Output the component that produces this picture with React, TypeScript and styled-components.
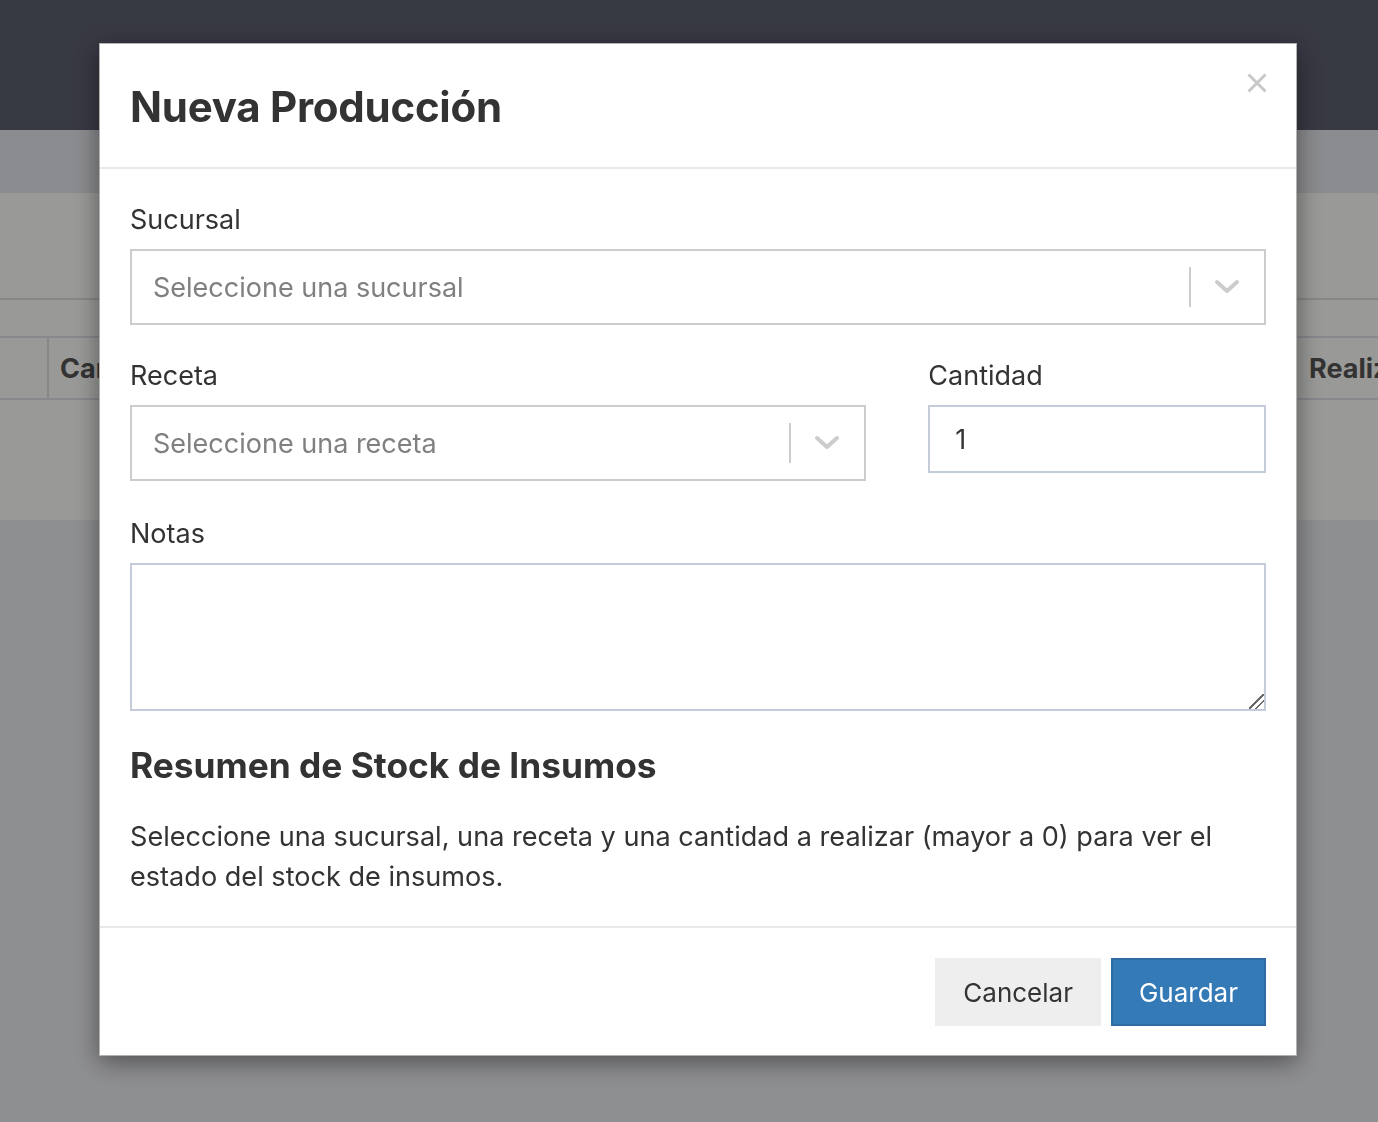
import styled, { createGlobalStyle } from 'styled-components';

const GlobalStyle = createGlobalStyle`
  html, body {
    margin: 0;
    padding: 0;
  }
  body {
    font-family: Inter, "Noto Sans", "Liberation Sans", sans-serif;
    color: #333;
    background: #edeef2;
  }
  * {
    box-sizing: border-box;
  }
`;

function Chevron() {
  return (
    <svg width="26" height="16" viewBox="0 0 26 16">
      <polyline
        points="3,3 13,12 23,3"
        fill="none"
        stroke="#cccccc"
        strokeWidth="4"
        strokeLinecap="round"
        strokeLinejoin="round"
      />
    </svg>
  );
}

function Select({ placeholder }: { placeholder: string }) {
  return (
    <SelectBox>
      <Placeholder>{placeholder}</Placeholder>
      <Separator />
      <Indicator>
        <Chevron />
      </Indicator>
    </SelectBox>
  );
}

function App() {
  return (
    <>
      <GlobalStyle />
      <Page>
        <TopBar />
        <SubBar />
        <Card>
          <Toolbar />
          <EmptyRow />
          <HeadRow>
            <HeadCell />
            <HeadCell $divider>Cantidad</HeadCell>
            <HeadCell>Realizado</HeadCell>
          </HeadRow>
          <CardBody />
        </Card>
      </Page>

      <Backdrop>
        <Modal>
          <ModalHeader>
            <ModalTitle>Nueva Producción</ModalTitle>
            <CloseButton aria-label="Cerrar">
              <svg width="20" height="20" viewBox="0 0 20 20">
                <path d="M1.5 1.5 L18.5 18.5 M18.5 1.5 L1.5 18.5" stroke="#c8c8c8" strokeWidth="3" />
              </svg>
            </CloseButton>
          </ModalHeader>

          <ModalBody>
            <FormGroup>
              <Label>Sucursal</Label>
              <Select placeholder="Seleccione una sucursal" />
            </FormGroup>

            <FormRow>
              <FormGroup>
                <Label>Receta</Label>
                <Select placeholder="Seleccione una receta" />
              </FormGroup>
              <FormGroup>
                <Label>Cantidad</Label>
                <TextInput type="number" defaultValue={1} />
              </FormGroup>
            </FormRow>

            <FormGroup>
              <Label>Notas</Label>
              <TextArea />
            </FormGroup>

            <SectionTitle>Resumen de Stock de Insumos</SectionTitle>
            <HelpText>
              Seleccione una sucursal, una receta y una cantidad a realizar (mayor a 0) para ver el
              estado del stock de insumos.
            </HelpText>
          </ModalBody>

          <ModalFooter>
            <Button $variant="default">Cancelar</Button>
            <Button $variant="primary">Guardar</Button>
          </ModalFooter>
        </Modal>
      </Backdrop>
    </>
  );
}

const Page = styled.div`
  min-height: 1122px;
  overflow: hidden;
  background: #edeef2;
`;
const TopBar = styled.div`
  height: 130px;
  background: #5d5f70;
`;
const SubBar = styled.div`
  height: 63px;
  background: #e8e9ee;
`;
const Card = styled.div`
  background: #fffffd;
`;
const Toolbar = styled.div`
  height: 107px;
  border-bottom: 2px solid #e2e2e2;
`;
const EmptyRow = styled.div`
  height: 38px;
  border-bottom: 2px solid #dfe3ea;
`;
const HeadRow = styled.div`
  display: grid;
  grid-template-columns: 47px 1fr 80px;
  height: 62px;
  border-bottom: 2px solid #dfe3ea;
`;
const HeadCell = styled.div<{ $divider?: boolean }>`
  display: flex;
  align-items: center;
  padding-left: 11px;
  font-size: 27px;
  font-weight: 700;
  color: #555;
  white-space: nowrap;
  overflow: hidden;
  border-left: ${({ $divider }) => ($divider ? '2px solid #dfe3ea' : 'none')};
`;
const CardBody = styled.div`
  height: 120px;
`;

const Backdrop = styled.div`
  position: fixed;
  inset: 0;
  background: rgba(0, 0, 0, 0.4);
  display: flex;
  justify-content: center;
  align-items: flex-start;
  padding: 43px 0 0 18px;
`;
const Modal = styled.div`
  width: 1198px;
  background: #fff;
  border: 1px solid rgba(0, 0, 0, 0.3);
  box-shadow: 0 6px 24px rgba(0, 0, 0, 0.45);
`;
const ModalHeader = styled.div`
  position: relative;
  padding: 32px 30px 29px;
  border-bottom: 2px solid #e9e9e9;
`;
const ModalTitle = styled.h4`
  margin: 0;
  font-size: 42px;
  line-height: 62px;
  font-weight: 700;
  color: #333;
  letter-spacing: -0.25px;
`;
const CloseButton = styled.button`
  position: absolute;
  top: 29px;
  right: 29px;
  padding: 0;
  border: 0;
  background: transparent;
  cursor: pointer;
  line-height: 0;
`;
const ModalBody = styled.div`
  padding: 31px 30px 29px;
`;
const FormGroup = styled.div`
  margin-bottom: 31px;
`;
const FormRow = styled.div`
  display: grid;
  grid-template-columns: 737fr 338fr;
  column-gap: 62px;
  align-items: start;
  margin-bottom: 2px;
`;
const Label = styled.label`
  display: block;
  font-size: 27px;
  line-height: 40px;
  margin-bottom: 9px;
  color: #333;
`;
const SelectBox = styled.div`
  display: flex;
  align-items: center;
  height: 76px;
  border: 2px solid #cccccc;
  background: #fff;
`;
const Placeholder = styled.span`
  flex: 1;
  padding-left: 21px;
  font-size: 27px;
  color: #808080;
`;
const Separator = styled.span`
  align-self: stretch;
  width: 2px;
  margin: 16px 0;
  background: #cccccc;
`;
const Indicator = styled.span`
  display: flex;
  align-items: center;
  padding: 0 24px 0 23px;
`;
const TextInput = styled.input`
  display: block;
  width: 100%;
  height: 68px;
  padding: 0 25px;
  border: 2px solid #c4ccda;
  border-radius: 0;
  font-family: inherit;
  font-size: 27px;
  color: #333;
  background: #fff;
  outline: none;
  -moz-appearance: textfield;
  &::-webkit-inner-spin-button,
  &::-webkit-outer-spin-button {
    -webkit-appearance: none;
    margin: 0;
  }
`;
const TextArea = styled.textarea`
  display: block;
  width: 100%;
  height: 148px;
  padding: 12px 22px;
  border: 2px solid #c4ccda;
  border-radius: 0;
  font-family: inherit;
  font-size: 27px;
  background: #fff;
  resize: vertical;
  outline: none;

  &::-webkit-scrollbar {
    width: 18px;
    height: 18px;
    background: transparent;
  }
  &::-webkit-resizer {
    background: linear-gradient(
      135deg,
      transparent 0 46%,
      #6a6a6a 46% 54%,
      transparent 54% 68%,
      #6a6a6a 68% 76%,
      transparent 76%
    );
  }
`;
const SectionTitle = styled.h3`
  margin: 0 0 27px;
  font-size: 35.3px;
  line-height: 48px;
  font-weight: 700;
  color: #333;
`;
const HelpText = styled.p`
  margin: 0;
  font-size: 27.1px;
  line-height: 40px;
  color: #333;
`;
const ModalFooter = styled.div`
  display: flex;
  justify-content: flex-end;
  gap: 10px;
  padding: 30px 30px 29px;
  border-top: 2px solid #e9e9e9;
`;
const Button = styled.button<{ $variant: 'default' | 'primary' }>`
  height: 68px;
  padding: 0 26px;
  border: 2px solid ${({ $variant }) => ($variant === 'primary' ? '#2e6da4' : '#eeeeee')};
  border-radius: 0;
  background: ${({ $variant }) => ($variant === 'primary' ? '#337ab7' : '#eeeeee')};
  color: ${({ $variant }) => ($variant === 'primary' ? '#fff' : '#333')};
  font-family: inherit;
  font-size: 26px;
  cursor: pointer;
`;

export default App;
